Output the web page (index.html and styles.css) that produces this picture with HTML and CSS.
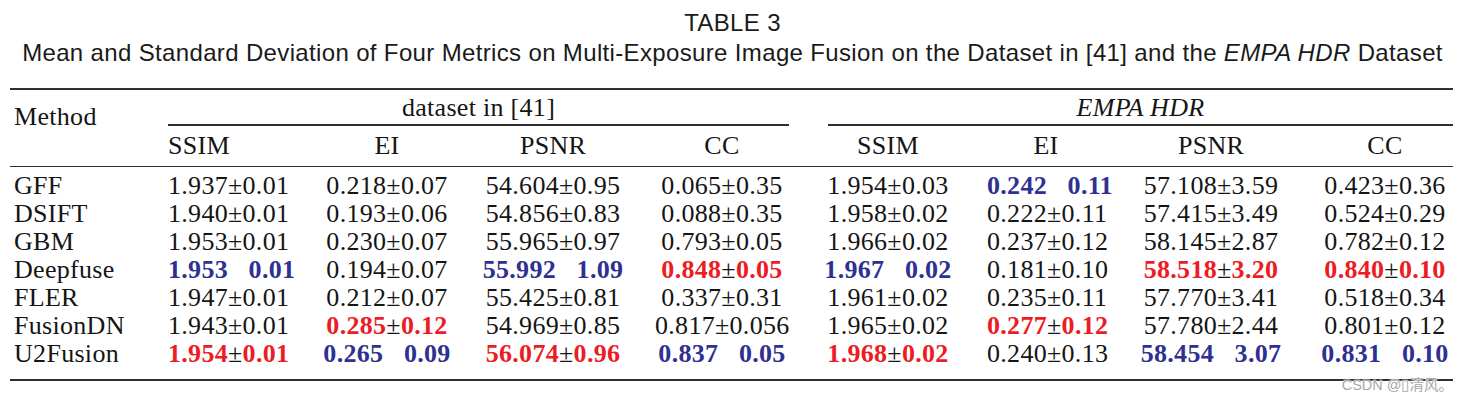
FILE: index.html
```html
<!DOCTYPE html>
<html>
<head>
<meta charset="utf-8">
<title>TABLE 3</title>
<link rel="stylesheet" href="styles.css">
</head>
<body>
<div class="page">
  <div class="title">TABLE 3</div>
  <div class="caption">Mean and Standard Deviation of Four Metrics on Multi-Exposure Image Fusion on the Dataset in [41] and the <i>EMPA HDR</i> Dataset</div>

  <div class="table">
    <div class="method-head">Method</div>
    <div class="group g1"><span>dataset in [41]</span></div>
    <div class="group g2"><span><i>EMPA HDR</i></span></div>

    <div class="sub left">SSIM</div>
    <div class="sub">EI</div>
    <div class="sub">PSNR</div>
    <div class="sub">CC</div>
    <div class="sub">SSIM</div>
    <div class="sub">EI</div>
    <div class="sub">PSNR</div>
    <div class="sub">CC</div>

    <div class="midrule"></div>

    <div class="name first">GFF</div>
    <div class="c left first">1.937±0.01</div>
    <div class="c first">0.218±0.07</div>
    <div class="c first">54.604±0.95</div>
    <div class="c first">0.065±0.35</div>
    <div class="c first">1.954±0.03</div>
    <div class="c first blue">0.242<span class="pm">±</span>0.11</div>
    <div class="c first">57.108±3.59</div>
    <div class="c first">0.423±0.36</div>

    <div class="name">DSIFT</div>
    <div class="c left">1.940±0.01</div>
    <div class="c">0.193±0.06</div>
    <div class="c">54.856±0.83</div>
    <div class="c">0.088±0.35</div>
    <div class="c">1.958±0.02</div>
    <div class="c">0.222±0.11</div>
    <div class="c">57.415±3.49</div>
    <div class="c">0.524±0.29</div>

    <div class="name">GBM</div>
    <div class="c left">1.953±0.01</div>
    <div class="c">0.230±0.07</div>
    <div class="c">55.965±0.97</div>
    <div class="c">0.793±0.05</div>
    <div class="c">1.966±0.02</div>
    <div class="c">0.237±0.12</div>
    <div class="c">58.145±2.87</div>
    <div class="c">0.782±0.12</div>

    <div class="name">Deepfuse</div>
    <div class="c left blue">1.953<span class="pm">±</span>0.01</div>
    <div class="c">0.194±0.07</div>
    <div class="c blue">55.992<span class="pm">±</span>1.09</div>
    <div class="c"><b class="red">0.848</b>±<b class="red">0.05</b></div>
    <div class="c blue">1.967<span class="pm">±</span>0.02</div>
    <div class="c">0.181±0.10</div>
    <div class="c"><b class="red">58.518</b>±<b class="red">3.20</b></div>
    <div class="c"><b class="red">0.840</b>±<b class="red">0.10</b></div>

    <div class="name">FLER</div>
    <div class="c left">1.947±0.01</div>
    <div class="c">0.212±0.07</div>
    <div class="c">55.425±0.81</div>
    <div class="c">0.337±0.31</div>
    <div class="c">1.961±0.02</div>
    <div class="c">0.235±0.11</div>
    <div class="c">57.770±3.41</div>
    <div class="c">0.518±0.34</div>

    <div class="name">FusionDN</div>
    <div class="c left">1.943±0.01</div>
    <div class="c"><b class="red">0.285</b>±<b class="red">0.12</b></div>
    <div class="c">54.969±0.85</div>
    <div class="c">0.817±0.056</div>
    <div class="c">1.965±0.02</div>
    <div class="c"><b class="red">0.277</b>±<b class="red">0.12</b></div>
    <div class="c">57.780±2.44</div>
    <div class="c">0.801±0.12</div>

    <div class="name last">U2Fusion</div>
    <div class="c left last"><b class="red">1.954</b>±<b class="red">0.01</b></div>
    <div class="c last blue">0.265<span class="pm">±</span>0.09</div>
    <div class="c last"><b class="red">56.074</b>±<b class="red">0.96</b></div>
    <div class="c last blue">0.837<span class="pm">±</span>0.05</div>
    <div class="c last"><b class="red">1.968</b>±<b class="red">0.02</b></div>
    <div class="c last">0.240±0.13</div>
    <div class="c last blue">58.454<span class="pm">±</span>3.07</div>
    <div class="c last blue">0.831<span class="pm">±</span>0.10</div>
  </div>

  <div class="watermark">CSDN @▯清风。</div>
</div>
</body>
</html>
```

FILE: styles.css
```css
html, body {
  margin: 0;
  padding: 0;
  background: #ffffff;
}

.page {
  position: relative;
  width: 1465px;
  height: 404px;
  overflow: hidden;
  padding-top: 9px;
  box-sizing: border-box;
}

.title,
.caption {
  font-family: "Liberation Sans", Arial, sans-serif;
  font-size: 24px;
  line-height: 28px;
  letter-spacing: 0.35px;
  color: #1a1a1a;
  text-align: center;
}

.caption {
  margin-top: 2px;
}

.table {
  display: grid;
  grid-template-columns: 158px 155px 128px 204px 134px 198px 118px 212px 136px;
  margin: 21px 0 0 10px;
  width: 1443px;
  border-top: 2px solid #2f2f2f;
  border-bottom: 2.5px solid #2f2f2f;
  font-family: "Liberation Serif", "Times New Roman", serif;
  font-size: 26px;
  line-height: 28px;
  letter-spacing: 0.3px;
  color: #151515;
  white-space: nowrap;
}

.method-head {
  grid-row: 1 / span 2;
  grid-column: 1;
  padding: 13px 0 0 4px;
}

.group {
  padding-top: 4px;
  text-align: center;
}

.group span {
  display: block;
  padding-bottom: 2px;
  border-bottom: 2px solid #2f2f2f;
}

.g1 {
  grid-column: 2 / span 4;
}

.g2 {
  grid-column: 6 / span 4;
  padding-left: 39px;
}

.sub {
  padding: 6px 0;
  text-align: center;
}

.sub.left {
  text-align: left;
}

.midrule {
  grid-column: 1 / -1;
  height: 1.3px;
  background: #2f2f2f;
}

.name {
  padding-left: 4px;
}

.c {
  text-align: center;
}

.c.left {
  text-align: left;
}

.first {
  padding-top: 5px;
}

.last {
  padding-bottom: 11px;
}

.blue {
  color: #2e3192;
  font-weight: bold;
}

.red {
  color: #ed1c24;
  font-weight: bold;
}

.pm {
  visibility: hidden;
  margin: 0 3px;
}

.watermark {
  position: absolute;
  right: 12px;
  top: 375px;
  font-family: "Liberation Sans", "Noto Sans CJK SC", sans-serif;
  font-size: 14.5px;
  line-height: 20px;
  color: #a8a8a8;
  text-shadow: 0 0 2px #ffffff, 0 0 2px #ffffff, 0 0 1px #ffffff;
}
```
